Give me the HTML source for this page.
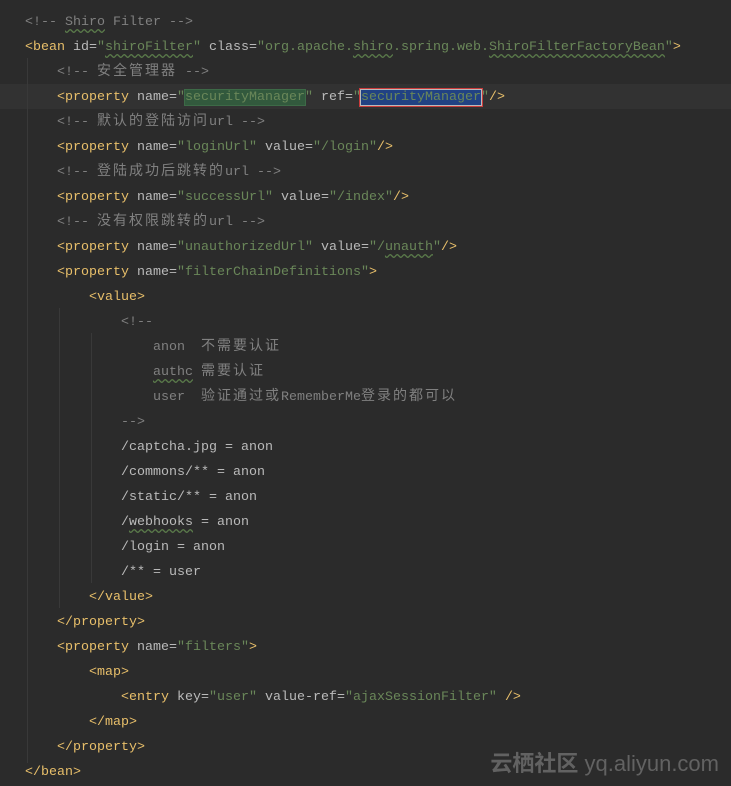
<!DOCTYPE html>
<html><head><meta charset="utf-8"><style>
body{margin:0;background:#2b2b2b;width:731px;height:786px;overflow:hidden;position:relative}
pre{margin:0;position:absolute;left:25px;top:10px;font-family:"Liberation Mono","Noto Sans CJK SC",monospace;font-size:13.33px;line-height:25px;color:#bababa}
.t{color:#e8bf6a}.a{color:#bababa}.v{color:#6a8759}.c{color:#808080}
.z{font-family:"Noto Sans CJK SC",sans-serif;font-size:14px;letter-spacing:2px;line-height:0}
.hl{position:absolute;left:0;top:84px;width:731px;height:25px;background:#323232}
.g1{background:#32593d;outline:1px solid #3d6a47}
.g2{background:#214283;outline:1px solid #bbb;box-shadow:0 0 0 2px #c93b3b}
.u{text-decoration:underline wavy #5a7a4a;text-underline-offset:3px}
.ig{position:absolute;width:1px;background:#393939}
.wm{position:absolute;right:12px;top:746px;font-family:"Liberation Sans","Noto Sans CJK SC",sans-serif;font-size:22px;color:#626262}
.wm b{font-family:"Noto Sans CJK SC",sans-serif;font-weight:700}
</style></head><body>
<div class="hl"></div>
<div class="ig" style="left:27px;top:58px;height:705px"></div>
<div class="ig" style="left:59px;top:308px;height:300px"></div>
<div class="ig" style="left:91px;top:333px;height:250px"></div>
<pre><span class="c">&lt;!-- <span class="u">Shiro</span> Filter --&gt;</span>
<span class="t">&lt;bean </span><span class="a">id=</span><span class="v">"<span class="u">shiroFilter</span>"</span> <span class="a">class=</span><span class="v">"org.apache.<span class="u">shiro</span>.spring.web.<span class="u">ShiroFilterFactoryBean</span>"</span><span class="t">&gt;</span>
    <span class="c">&lt;!-- <span class="z">安全管理器</span> --&gt;</span>
    <span class="t">&lt;property </span><span class="a">name=</span><span class="v">"<span class="g1">securityManager</span>"</span> <span class="a">ref=</span><span class="v">"<span class="g2">securityManager</span>"</span><span class="t">/&gt;</span>
    <span class="c">&lt;!-- <span class="z">默认的登陆访问</span>url --&gt;</span>
    <span class="t">&lt;property </span><span class="a">name=</span><span class="v">"loginUrl"</span> <span class="a">value=</span><span class="v">"/login"</span><span class="t">/&gt;</span>
    <span class="c">&lt;!-- <span class="z">登陆成功后跳转的</span>url --&gt;</span>
    <span class="t">&lt;property </span><span class="a">name=</span><span class="v">"successUrl"</span> <span class="a">value=</span><span class="v">"/index"</span><span class="t">/&gt;</span>
    <span class="c">&lt;!-- <span class="z">没有权限跳转的</span>url --&gt;</span>
    <span class="t">&lt;property </span><span class="a">name=</span><span class="v">"unauthorizedUrl"</span> <span class="a">value=</span><span class="v">"/<span class="u">unauth</span>"</span><span class="t">/&gt;</span>
    <span class="t">&lt;property </span><span class="a">name=</span><span class="v">"filterChainDefinitions"</span><span class="t">&gt;</span>
        <span class="t">&lt;value&gt;</span>
            <span class="c">&lt;!--</span>
<span class="c">                anon  <span class="z">不需要认证</span></span>
<span class="c">                <span class="u">authc</span> <span class="z">需要认证</span></span>
<span class="c">                user  <span class="z">验证通过或</span>RememberMe<span class="z">登录的都可以</span></span>
            <span class="c">--&gt;</span>
            /captcha.jpg = anon
            /commons/** = anon
            /static/** = anon
            /<span class="u">webhooks</span> = anon
            /login = anon
            /** = user
        <span class="t">&lt;/value&gt;</span>
    <span class="t">&lt;/property&gt;</span>
    <span class="t">&lt;property </span><span class="a">name=</span><span class="v">"filters"</span><span class="t">&gt;</span>
        <span class="t">&lt;map&gt;</span>
            <span class="t">&lt;entry </span><span class="a">key=</span><span class="v">"user"</span> <span class="a">value-ref=</span><span class="v">"ajaxSessionFilter"</span> <span class="t">/&gt;</span>
        <span class="t">&lt;/map&gt;</span>
    <span class="t">&lt;/property&gt;</span>
<span class="t">&lt;/bean&gt;</span></pre>
<div class="wm"><b>云栖社区</b> yq.aliyun.com</div>
</body></html>
